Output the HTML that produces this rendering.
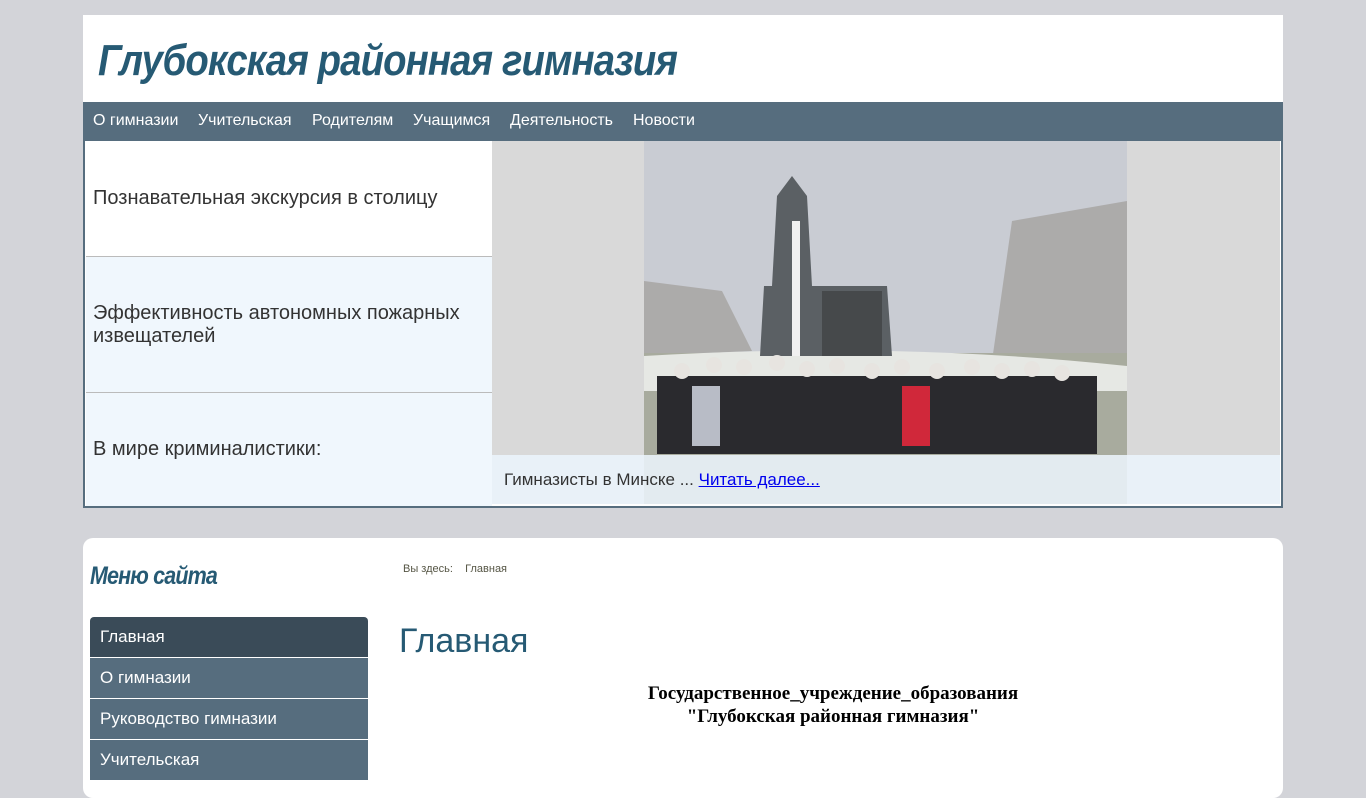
<!DOCTYPE html>
<html><head><meta charset="utf-8"><style>
*{margin:0;padding:0;box-sizing:border-box}
body{width:1366px;height:768px;overflow:hidden;background:#d3d4d9;font-family:"Liberation Sans",sans-serif}
.hdr{position:absolute;left:83px;top:15px;width:1200px;height:87px;background:#fff}
.hdr h1{position:absolute;left:15px;top:21px;font:italic bold 44px "Liberation Sans",sans-serif;color:#265a74;letter-spacing:-1px;transform:scaleX(.87);transform-origin:left;white-space:nowrap}
.nav{position:absolute;left:83px;top:102px;width:1200px;height:39px;background:#566d7e}
.nav span{position:absolute;top:10px;color:#fff;font-size:16px}
.sl{position:absolute;left:83px;top:141px;width:1200px;height:367px;border:2px solid #566d7e;border-top:none;background:#fff}
.row{position:absolute;left:1px;width:406px;font-size:20px;color:#333;padding-left:7px;display:flex;align-items:center;border-bottom:1px solid #bbb}
.ph{position:absolute;left:407px;top:0;width:788px;height:363px;background:#d9d9d9;overflow:hidden}
.cap{position:absolute;left:0;top:314px;width:788px;height:51px;background:rgba(235,244,252,.88);font-size:17px;color:#333;padding:15px 12px}
.cap a{color:#00e;text-decoration:underline}
.main{position:absolute;left:83px;top:538px;width:1200px;height:260px;background:#fff;border-radius:10px}
.mt{position:absolute;left:7px;top:24px;font:italic bold 25px "Liberation Sans",sans-serif;color:#265a74;letter-spacing:-1px;transform:scaleX(.86);transform-origin:left;white-space:nowrap}
.mi{position:absolute;left:7px;width:278px;height:40px;background:#566d7e;color:#fff;font-size:17px;padding:10px 10px}
</style></head><body>
<div class="hdr"><h1>Глубокская районная гимназия</h1></div>
<div class="nav"><span style="left:10px">О гимназии</span><span style="left:115px">Учительская</span><span style="left:229px">Родителям</span><span style="left:330px">Учащимся</span><span style="left:427px">Деятельность</span><span style="left:550px">Новости</span></div>
<div class="sl">
<div class="row" style="top:0;height:116px;background:#fff">Познавательная экскурсия в столицу</div>
<div class="row" style="top:116px;height:136px;background:#f0f7fd">Эффективность автономных пожарных извещателей</div>
<div class="row" style="top:252px;height:113px;background:#f0f7fd;border:none">В мире криминалистики:</div>
<div class="ph">
<svg width="788" height="363" style="position:absolute;left:0;top:0">
<rect x="152" y="0" width="483" height="363" fill="#c9ccd3"/>
<path d="M152 140 L230 150 L260 210 L152 215Z M520 80 L635 60 L635 230 L500 220Z" fill="#9a9590" opacity=".6"/>
<rect x="152" y="212" width="483" height="151" fill="#a8ab9e"/>
<path d="M152 215 Q400 200 635 225 L635 250 L152 250Z" fill="#e6e8e4"/>
<path d="M272 145 L280 145 L285 55 L300 35 L315 55 L320 145 L395 145 L400 215 L268 215Z" fill="#5b6064"/>
<rect x="330" y="150" width="60" height="65" fill="#46494b"/>
<rect x="300" y="80" width="8" height="135" fill="#f0f0f0"/>
<rect x="165" y="235" width="440" height="78" fill="#2a2a2e"/>
<g fill="#e7e4e0"><circle cx="190" cy="230" r="8"/><circle cx="222" cy="224" r="8"/><circle cx="252" cy="226" r="8"/><circle cx="285" cy="222" r="8"/><circle cx="315" cy="228" r="8"/><circle cx="345" cy="225" r="8"/><circle cx="380" cy="230" r="8"/><circle cx="410" cy="226" r="8"/><circle cx="445" cy="230" r="8"/><circle cx="480" cy="226" r="8"/><circle cx="510" cy="230" r="8"/><circle cx="540" cy="228" r="8"/><circle cx="570" cy="232" r="8"/></g>
<rect x="410" y="245" width="28" height="60" fill="#d0283a"/>
<rect x="200" y="245" width="28" height="60" fill="#b8bcc6"/>
</svg>
<div class="cap">Гимназисты в Минске ... <a>Читать далее...</a></div>
</div>
</div>
<div class="main">
<div class="mt">Меню сайта</div>
<div style="position:absolute;left:320px;top:25px;font-size:11px;color:#554">Вы здесь: &nbsp;&nbsp; Главная</div>
<div style="position:absolute;left:316px;top:84px;font-size:34px;color:#265a74">Главная</div>
<div style="position:absolute;left:350px;top:144px;width:800px;text-align:center;font:bold 19px 'Liberation Serif',serif;line-height:23px">Государственное_учреждение_образования<br>"Глубокская районная гимназия"</div>
<div class="mi" style="top:79px;background:#3a4b58;border-radius:4px 4px 0 0">Главная</div>
<div class="mi" style="top:120px">О гимназии</div>
<div class="mi" style="top:161px">Руководство гимназии</div>
<div class="mi" style="top:202px">Учительская</div>
</div>
</body></html>
